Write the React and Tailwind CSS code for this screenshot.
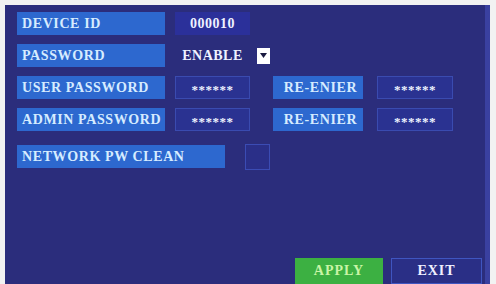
export default function App() {
  const font = { fontFamily: '"Liberation Serif", "DejaVu Serif", serif' };
  const label =
    "h-[23px] bg-[#2d68cf] text-[#d6ecff] font-bold text-[14px] tracking-[0.6px] whitespace-nowrap flex items-center pl-[5px] leading-none";
  const value =
    "h-[23px] bg-[#2a3291] border border-[#3a4bb0] text-[#eef2ff] font-bold text-[14px] tracking-[0.5px] whitespace-nowrap flex items-center justify-center leading-none";
  const stars = "text-[13px] tracking-[0.5px] pt-[4px]";
  return (
    <div className="w-[496px] h-[284px] bg-[#f2f2f2] pt-[5px] pl-[5px] overflow-hidden" style={font}>
      <div className="w-[485px] h-[279px] bg-[#2b2d7c] border-r-[5px] border-[#3a40a0] flex flex-col pt-[7px] pl-[12px]">
        <div className="flex items-center h-[23px]">
          <div className={`${label} w-[148px]`}>DEVICE ID</div>
          <div className={`${value} w-[75px] ml-[10px] border-transparent bg-[#2b309a]`}>000010</div>
        </div>
        <div className="flex items-center h-[23px] mt-[9px]">
          <div className={`${label} w-[148px]`}>PASSWORD</div>
          <div className="ml-[10px] w-[75px] h-[23px] text-[#eef2ff] font-bold text-[14px] tracking-[0.5px] flex items-center justify-center leading-none">ENABLE</div>
          <div className="ml-[7px] w-[13px] h-[16px] bg-white flex items-center justify-center">
            <svg width="7" height="5" viewBox="0 0 7 5"><path d="M0 0h7L3.5 5z" fill="#1a1a40" /></svg>
          </div>
        </div>
        <div className="flex items-center h-[23px] mt-[9px]">
          <div className={`${label} w-[148px]`}>USER PASSWORD</div>
          <div className={`${value} w-[75px] ml-[10px]`}><span className={stars}>******</span></div>
          <div className={`${label} w-[90px] ml-[23px] justify-center pl-0`}>RE-ENIER</div>
          <div className={`${value} w-[76px] ml-[14px]`}><span className={stars}>******</span></div>
        </div>
        <div className="flex items-center h-[23px] mt-[9px]">
          <div className={`${label} w-[148px]`}>ADMIN PASSWORD</div>
          <div className={`${value} w-[75px] ml-[10px]`}><span className={stars}>******</span></div>
          <div className={`${label} w-[90px] ml-[23px] justify-center pl-0`}>RE-ENIER</div>
          <div className={`${value} w-[76px] ml-[14px]`}><span className={stars}>******</span></div>
        </div>
        <div className="flex items-center h-[23px] mt-[14px]">
          <div className={`${label} w-[208px]`}>NETWORK PW CLEAN</div>
          <div className="ml-[20px] w-[25px] h-[26px] border border-[#3b4cb4] bg-[#2a2f88]"></div>
        </div>
        <div className="flex-1"></div>
        <div className="flex justify-end pr-[3px]">
          <div className="w-[88px] h-[26px] bg-[#3cb042] text-[#c9f5a6] font-bold text-[14px] tracking-[1px] flex items-center justify-center leading-none">APPLY</div>
          <div className="ml-[8px] w-[91px] h-[26px] border border-[#3f55c0] bg-[#2a2f86] text-[#f0f0ff] font-bold text-[14px] tracking-[1px] flex items-center justify-center leading-none">EXIT</div>
        </div>
      </div>
    </div>
  );
}
